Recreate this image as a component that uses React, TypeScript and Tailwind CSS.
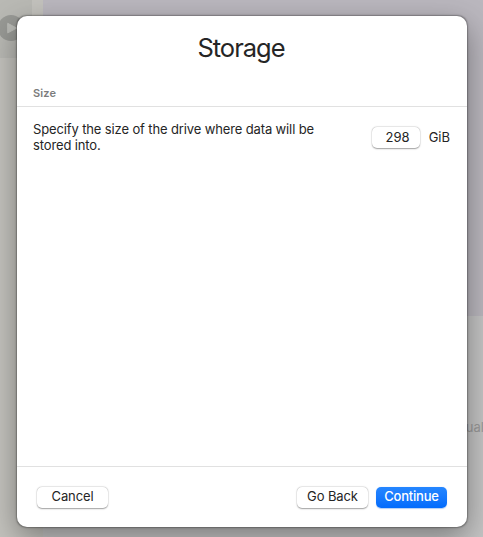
import type { ReactNode } from "react";

function Button({ children, className }: { children: ReactNode; className: string }) {
  return (
    <button
      type="button"
      className={`flex h-[21px] w-[71px] items-center justify-center rounded-[5px] pb-[3px] text-[13px] leading-4 ${className}`}
    >
      {children}
    </button>
  );
}

const plain =
  "bg-white text-[#252525] shadow-[0_0_0_0.5px_rgba(0,0,0,0.06),0_0.5px_1.5px_rgba(0,0,0,0.36)]";

function Backdrop() {
  return (
    <div className="flex h-full w-full" aria-hidden="true">
      <aside className="h-full w-[43px] shrink-0 bg-[#c3c2bd]">
        <div className="h-[58px] w-8 bg-[#b9b9b4] pt-[15px]">
          <svg className="-ml-[2px] h-[26px] w-[26px]" viewBox="0 0 26 26">
            <circle cx="13" cy="13" r="13" fill="#989995" />
            <path d="M9.7 8.3v9.6l9-4.8z" fill="#bbbcb7" stroke="#bbbcb7" strokeLinejoin="round" />
          </svg>
        </div>
      </aside>
      <main className="flex h-full flex-1 flex-col">
        <div className="h-[316px] bg-[#bab7be]" />
        <div className="flex-1 bg-[#c4c4c4] pt-[103px] text-right text-[13px] leading-4 text-[#999999]">
          <span className="-mr-px">ual</span>
        </div>
      </main>
    </div>
  );
}

export default function App() {
  return (
    <div className="relative h-[537px] w-[483px] overflow-hidden font-['Inter','Liberation_Sans',sans-serif]">
      <Backdrop />
      <section
        role="dialog"
        className="absolute top-4 left-[17px] flex h-[511px] w-[450px] flex-col rounded-[10px] bg-white text-[#252525] shadow-[0_0_1.5px_0.5px_rgba(0,0,0,0.3),0_10px_30px_rgba(0,0,0,0.38)]"
      >
        <header className="flex h-[91px] flex-col border-b border-[#e1e1e1]">
          <h1 className="pt-4 pr-[2px] text-center text-[25.5px] leading-8 tracking-[-1px]">Storage</h1>
          <h2 className="mt-[22px] pl-4 text-[11px] leading-[14px] font-semibold tracking-[0.15px] text-[#7c7c7c]">
            Size
          </h2>
        </header>
        <div className="flex flex-1 items-start justify-between pt-[14px] pr-[17px] pl-4">
          <p className="w-[300px] text-[13px] leading-4 tracking-[-0.13px]">
            Specify the size of the drive where data will be stored into.
          </p>
          <label className="mt-[6px] flex items-center gap-[9px] text-[13px] leading-4">
            <span
              className={`flex h-[21px] w-12 items-center justify-end rounded-[5px] pr-2.5 pb-[2px] ${plain}`}
            >
              298
            </span>
            <span className="pb-[2px]">GiB</span>
          </label>
        </div>
        <footer className="flex h-[61px] items-start border-t border-[#e1e1e1] pt-5 pr-5 pl-5">
          <Button className={`tracking-[-0.1px] ${plain}`}>Cancel</Button>
          <Button className={`mr-2 ml-auto tracking-[-0.1px] ${plain}`}>Go Back</Button>
          <Button className="bg-gradient-to-b from-[#2586ff] to-[#026bfc] font-medium tracking-[-0.2px] text-white shadow-[0_0.5px_1px_rgba(0,90,220,0.3)]">
            Continue
          </Button>
        </footer>
      </section>
    </div>
  );
}
